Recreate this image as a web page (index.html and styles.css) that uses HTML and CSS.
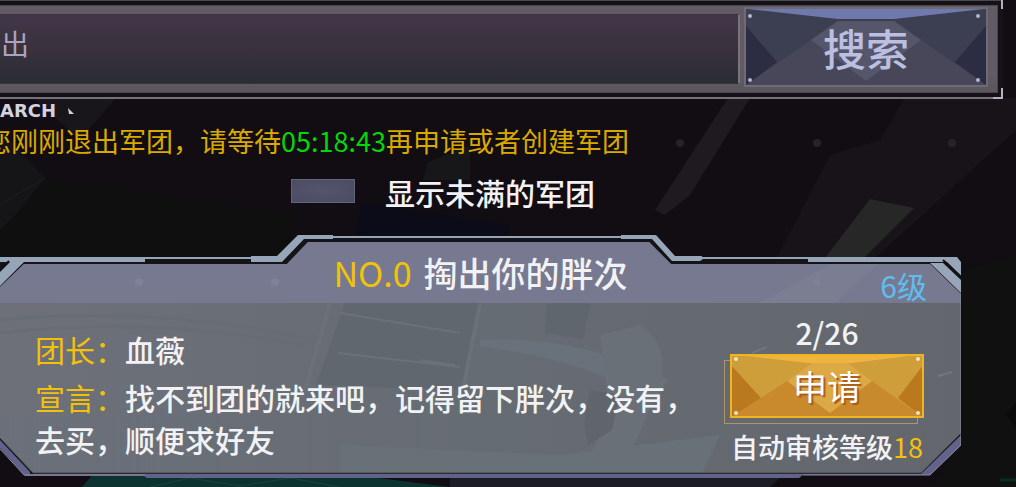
FILE: index.html
```html
<!DOCTYPE html>
<html lang="zh-CN">
<head>
    <meta charset="UTF-8">
    <meta name="viewport" content="width=device-width, initial-scale=1.0">
    <title>军团搜索</title>
    <link rel="stylesheet" href="styles.css">
</head>
<body>
    <svg class="scene" viewBox="0 0 1016 487" preserveAspectRatio="xMidYMid slice" aria-hidden="true">
        <rect width="1016" height="487" fill="#110d12"/>
        <path d="M0 175 45 178 300 215 280 257 0 257z" fill="#0f0f10"/>
        <path d="M0 130 45 178 15 215 0 230z" fill="#151417"/>
        <path d="M0 205 45 178" fill="none" stroke="#1d1f1f"/>
        <path d="M30 95 115 99 80 140z" fill="#18151b"/>
        <path d="M728 98 750 98 690 195 665 215 655 210z" fill="#1e1a1f"/>
        <path d="M423 180 428 162 470 145 470 180z" fill="#171719"/>
        <path d="M362 203 510 225 505 240 355 235z" fill="#0b0c17"/>
        <path d="M905 98 1016 98 1016 130 840 290 760 290 830 155 880 140z" fill="#171318"/>
        <path d="M870 199 914 208 860 262 822 262z" fill="#272727"/>
        <path d="M961 270 1016 255 1016 487 930 487 961 445z" fill="#101011"/>
        <path d="M1006 415 1016 402 1016 428z" fill="#0a0a0b"/>
        <path d="M95 472 330 472 450 487 82 487z" fill="#0d3331"/>
        <path d="M150 487 190 478 240 486 290 478 340 487" fill="none" stroke="#16433f"/>
        <path d="M450 478 780 478 770 487 450 487z" fill="#1b1c25"/>
        <path d="M1000 480h16" stroke="#0b2d18" stroke-width="3"/>
        <g fill="#262328">
            <circle cx="680" cy="143" r="4"/>
            <circle cx="817" cy="143" r="4"/>
            <circle cx="952" cy="143" r="4"/>
        </g>
    </svg>

    <form class="search">
        <div class="search-bar">
            <input class="search-input" type="text" value="出" aria-label="搜索军团">
            <button class="btn search-btn" type="button">
                <svg class="facets" viewBox="0 0 240 76" preserveAspectRatio="none" aria-hidden="true">
                    <rect width="240" height="76" fill="#3c3e52"/>
                    <path d="M0 17 31 53 0 76zM240 17 209 53 240 76z" fill="#2c2c42"/>
                    <path d="M0 76 92 12H148L240 76z" fill="#474759"/>
                    <path d="M92 12H148L175 31 120 72 65 31z" fill="#56566b"/>
                    <path d="M2 0H238L148 10H92z" fill="#7079ad"/>
                    <g fill="#b4b5cc">
                        <circle cx="4" cy="7" r="2"/>
                        <circle cx="232" cy="7" r="2"/>
                        <circle cx="4" cy="71" r="2"/>
                        <circle cx="232" cy="71" r="2"/>
                    </g>
                </svg>
                <span>搜索</span>
            </button>
        </div>
    </form>

    <main>
        <p class="tag">ARCH
            <svg width="6" height="6" viewBox="0 0 6 6" aria-hidden="true"><path d="M0 0 6 6H1z" fill="#d5d2df"/></svg>
        </p>
        <p class="notice">您刚刚退出军团，请等待<time>05:18:43</time>再申请或者创建军团</p>

        <div class="filter">
            <input type="checkbox" id="notFull">
            <label for="notFull">显示未满的军团</label>
        </div>

        <section class="card">
            <svg class="card-frame" viewBox="0 0 961 243" preserveAspectRatio="none" aria-hidden="true">
                <defs>
                    <clipPath id="panel">
                        <path d="M0 52 24 29H287L308 7H649L671 29H930L961 59V198L921 238H33L0 203z"/>
                    </clipPath>
                    <linearGradient id="body" x1="0" y1="0" x2="1" y2="0">
                        <stop offset="0" stop-color="#6d7079"/>
                        <stop offset="0.5" stop-color="#666c73"/>
                        <stop offset="1" stop-color="#63676d"/>
                    </linearGradient>
                    <pattern id="grid" width="8" height="8" patternUnits="userSpaceOnUse">
                        <path d="M0 0H8M0 0V8" stroke="#5d7279" fill="none"/>
                    </pattern>
                    <linearGradient id="fade" x1="0" y1="0" x2="1" y2="0">
                        <stop offset="0" stop-color="#fff"/>
                        <stop offset="1" stop-color="#000"/>
                    </linearGradient>
                    <mask id="gridMask">
                        <rect y="180" width="420" height="63" fill="url(#fade)"/>
                    </mask>
                </defs>
                <path d="M0 24H280L302 2H655L674 24H957L961 28V210L930 240H25L0 214z" fill="#151519"/>
                <g clip-path="url(#panel)">
                    <rect width="961" height="243" fill="url(#body)"/>
                    <path d="M0 85Q160 70 315 105M0 98Q160 80 310 112" stroke="#676d75" stroke-width="3" fill="none"/>
                    <path d="M345 68 480 68 462 155 316 150z" fill="#61676e"/>
                    <path d="M340 78 460 98M338 118 460 132M420 125 455 130" stroke="#6a7178" stroke-width="2" fill="none"/>
                    <path d="M330 68 305 155M480 68 463 155" stroke="#6a7178" stroke-width="4" fill="none"/>
                    <path d="M548 60H592L583 104 545 98z" fill="#60666d"/>
                    <path d="M480 105Q580 100 668 145L655 165Q570 120 480 112z" fill="#69717a"/>
                    <path d="M600 100 640 90Q670 110 660 150L630 220 615 240 580 240 610 180z" fill="#6a7077"/>
                    <path d="M590 155 620 160 612 195 588 210 584 190z" fill="#60656c"/>
                    <path d="M340 210 560 220 720 200 700 243H340z" fill="#697178"/>
                    <rect y="180" width="420" height="63" fill="url(#grid)" mask="url(#gridMask)"/>
                    <rect width="961" height="68" fill="#767990"/>
                    <path d="M760 68 830 29 878 29 835 68z" fill="#7b7e93"/>
                    <path d="M752 118 767 112M938 141 952 137" stroke="#73777c" stroke-width="2"/>
                    <g fill="#7e8197">
                        <circle cx="139" cy="47" r="4"/>
                        <circle cx="275" cy="47" r="4"/>
                        <circle cx="817" cy="47" r="4"/>
                    </g>
                </g>
                <g fill="#97a5b8">
                    <path d="M0 22H251V21H277L298 0H333V1H621V0H656L675 21H702V22H957L961 27V32L955 27H808V24H703L700 26H672L652 4H621V3H333V4H304L282 27H251V24H145V27H0z"/>
                    <path d="M10 27H24L0 51V37z"/>
                    <path d="M930 28H943L961 45V58z"/>
                    <path d="M946 26H956L961 31V41z"/>
                </g>
                <path d="M0 35 9 26M943 25 961 42" stroke="#121216" stroke-width="2"/>
                <path d="M0 203 33 238H921L961 198" fill="none" stroke="#44464f"/>
                <path d="M0 205 30 237V239H921L961 200V210L930 240H803L799 243H147L144 241H25L0 213z" fill="#62638a"/>
                <path d="M0 214 24 240H145M803 240H930L961 210V58" fill="none" stroke="#8b8d99"/>
            </svg>

            <header class="card-head">
                <h2><span class="gold">NO.0</span><span>掏出你的胖次</span></h2>
                <span class="level">6级</span>
            </header>
            <div class="card-body">
                <div class="info">
                    <p><span class="gold">团长：</span>血薇</p>
                    <p><span class="gold">宣言：</span>找不到团的就来吧，记得留下胖次，没有，去买，顺便求好友</p>
                </div>
                <div class="join">
                    <span class="count">2/26</span>
                    <button class="btn apply-btn" type="button">
                        <svg class="facets" viewBox="0 0 194 64" preserveAspectRatio="none" aria-hidden="true">
                            <rect width="194" height="64" fill="#cd9e3a"/>
                            <path d="M0 10 31 44 0 64zM194 10 168 44 194 64z" fill="#ba791e"/>
                            <path d="M0 64 57 27 82 9H118L142 27 194 64z" fill="#c9892d"/>
                            <path d="M82 9H118L142 27 100 59 57 27z" fill="#dda945"/>
                            <path d="M0 0H194L122 9H78z" fill="#efb540"/>
                            <rect x="1" y="1" width="192" height="62" fill="none" stroke="#f0b41e" stroke-width="2"/>
                            <g fill="#f5e3c0">
                                <circle cx="6" cy="5" r="2"/>
                                <circle cx="188" cy="5" r="2"/>
                                <circle cx="6" cy="59" r="2"/>
                                <circle cx="188" cy="59" r="2"/>
                            </g>
                        </svg>
                        <span>申请</span>
                    </button>
                    <span class="auto">自动审核等级<span class="gold">18</span></span>
                </div>
            </div>
        </section>
    </main>
</body>
</html>
```
FILE: styles.css
```css
* {
    box-sizing: border-box;
}

body {
    margin: 0;
    min-height: 100vh;
    position: relative;
    overflow: hidden;
    background-color: #110d12;
    color: #f2f2f5;
    font-family: "Noto Sans CJK SC", sans-serif;
    font-size: 30px;
}

h2, p {
    margin: 0;
}

.scene {
    position: absolute;
    inset: 0;
    width: 100%;
    height: 100%;
    z-index: -1;
}

/* search bar */
.search {
    position: relative;
    margin-right: 13px;
    padding: 4px 5px 4px 0;
    border-top: 1px solid #4b4850;
    border-bottom: 2px solid #74717c;
    background-color: #151117;
}

/* bright corner ticks of the frame */
.search::before,
.search::after {
    content: "";
    position: absolute;
    right: 0;
    width: 8px;
    height: 9px;
    border-right: 2px solid #b5afc2;
}

.search::before {
    top: -1px;
}

.search::after {
    bottom: -2px;
    border-bottom: 2px solid #b5afc2;
}

.search-bar {
    display: flex;
    align-items: center;
    gap: 6px;
    height: 88px;
    padding-right: 11px;
    background: linear-gradient(#625a65 0, #625a65 80%, #5a565c 100%);
    border: 1px solid #4a464e;
    border-left: none;
}

.search-input {
    flex: 1;
    min-width: 0;
    height: 70px;
    padding: 0 0 12px 1px;
    border: 1px solid #37323c;
    border-right: 2px solid #77747c;
    border-left: none;
    background: linear-gradient(#423748, #3a323e 45%, #33303b 70%, #2a2c33);
    color: #aaa3c0;
    font-family: inherit;
    font-size: 28px;
}

.btn {
    position: relative;
    padding: 0;
    border: none;
    background: none;
    font-family: inherit;
    cursor: pointer;
}

.btn span {
    position: relative;
}

.facets {
    position: absolute;
    inset: 0;
    width: 100%;
    height: 100%;
}

.search-btn {
    width: 240px;
    height: 76px;
    margin-bottom: 4px;
    color: #bbbfe2;
    font-size: 43px;
    font-weight: 500;
    line-height: 76px;
    box-shadow: 0 0 0 2px #6d6b75;
}

/* notice */
.tag {
    display: flex;
    align-items: center;
    gap: 12px;
    color: #d5d2df;
    font-family: "DejaVu Sans", sans-serif;
    font-size: 18px;
    font-weight: bold;
    line-height: 24px;
}

.notice {
    margin-left: -16px;
    color: #d9a900;
    font-size: 27px;
    line-height: 36px;
    white-space: nowrap;
}

.notice time {
    color: #00d80c;
}

.filter {
    display: flex;
    align-items: center;
    gap: 30px;
    margin: 11px 0 21px 291px;
    font-weight: 500;
    line-height: 44px;
}

.filter input {
    appearance: none;
    width: 64px;
    height: 24px;
    margin: 0 0 2px;
    border: 1px solid #63637c;
    background: radial-gradient(#54546c, #4b4b63);
}

/* legion card */
.card {
    position: relative;
    margin-right: 55px;
    padding-bottom: 11px;
    font-weight: 500;
}

.card-frame {
    position: absolute;
    inset: 0;
    width: 100%;
    height: 100%;
}

.card-head {
    position: relative;
    display: grid;
    grid-template-columns: 1fr auto 1fr;
    height: 68px;
    padding: 16px 34px 2px;
}

.card-head h2 {
    grid-column: 2;
    display: flex;
    gap: 12px;
    font-size: 34px;
    font-weight: 500;
    line-height: 44px;
}

.gold {
    color: #f2c10a;
    font-weight: 400;
}

.level {
    align-self: end;
    justify-self: end;
    color: #5fbdf0;
    font-weight: 400;
    line-height: 32px;
}

.card-body {
    position: relative;
    display: flex;
    gap: 16px;
    padding: 11px 37px 0 35px;
}

.info {
    flex: 1;
    padding-top: 14px;
    line-height: 42px;
}

.info p + p {
    margin-top: 6px;
}

.join {
    display: flex;
    flex-direction: column;
    align-items: center;
}

.count {
    line-height: 36px;
}

.apply-btn {
    width: 194px;
    height: 64px;
    margin: 4px 0 9px;
    color: #fff;
    font-size: 34px;
    font-weight: 400;
    line-height: 64px;
    text-shadow: 2px 2px 1px #a85a1a;
}

/* thin shadow frame behind the button */
.apply-btn::before {
    content: "";
    position: absolute;
    top: 6px;
    right: 6px;
    bottom: -6px;
    left: -6px;
    border: 1px solid #b0936a;
}

.auto {
    font-size: 27px;
    line-height: 40px;
    white-space: nowrap;
}
```
